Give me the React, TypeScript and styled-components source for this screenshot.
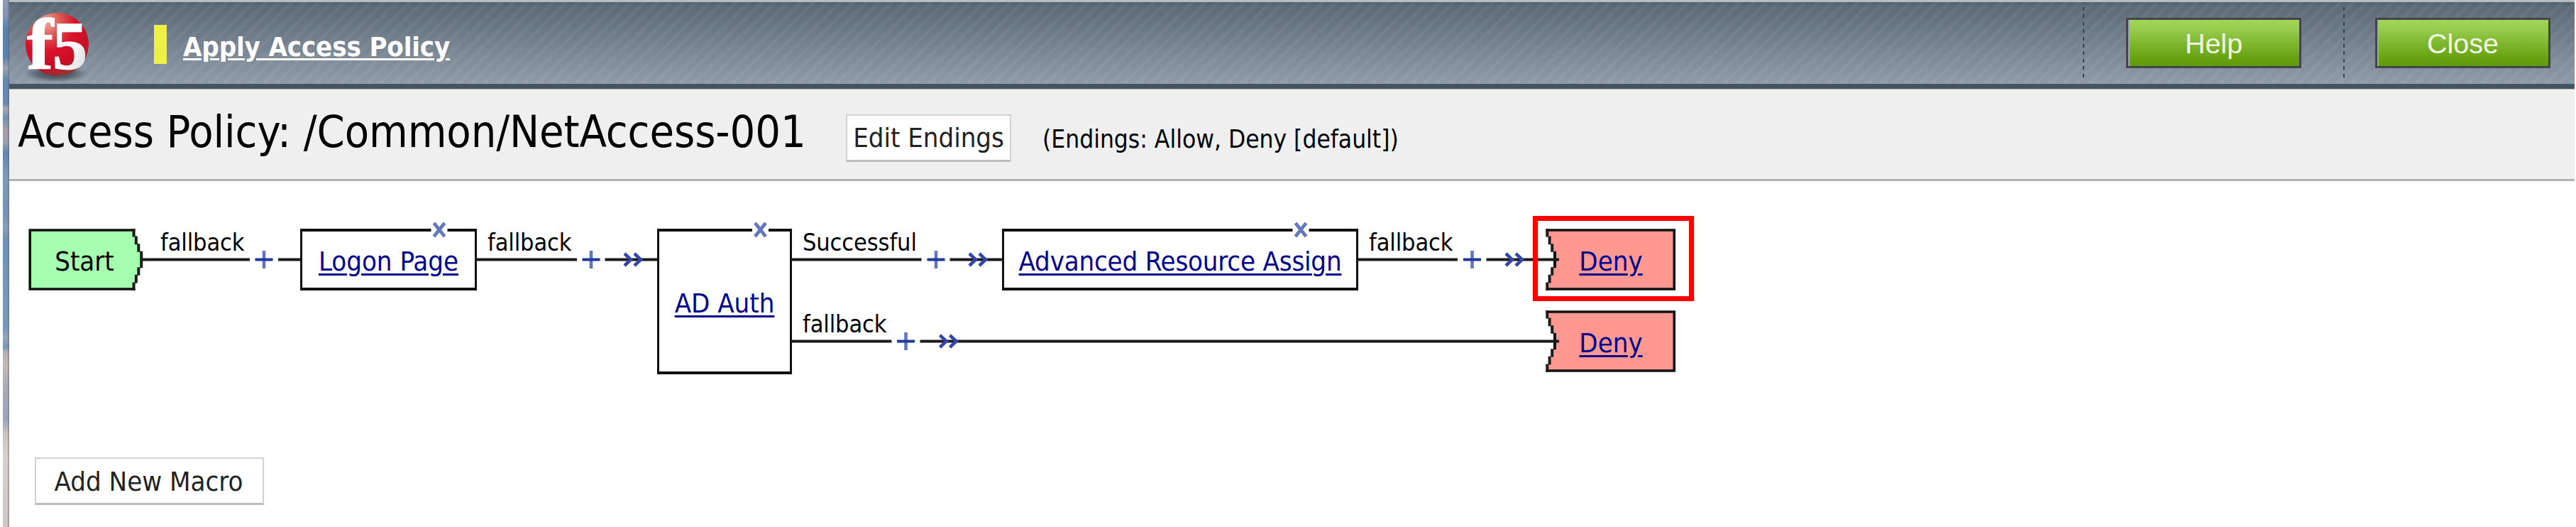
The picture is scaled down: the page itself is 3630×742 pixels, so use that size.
import React from "react";
import styled, { createGlobalStyle } from "styled-components";

const GlobalStyle = createGlobalStyle`
  html, body { margin: 0; background: #fff; }
  * { box-sizing: border-box; }
`;

const tahoma = `"DejaVu Sans Condensed", "DejaVu Sans", sans-serif`;

const Page = styled.div`
  display: flex;
  width: 3630px;
  height: 742px;
  padding: 0 2px 0 4px;
  overflow: hidden;
  background: #fff;
  font-family: ${tahoma};
  font-stretch: condensed;
  white-space: nowrap;
  color: #000;
`;

const DesktopEdge = styled.div`
  flex: none;
  width: 9px;
  border-right: 2px solid rgba(80, 85, 100, 0.35);
  background: linear-gradient(
    #8e9cb5 0, #8495b3 22px, #5b80ad 40px, #5a82b0 80px, #a09fae 96px, #6788ad 112px,
    #6a8bae 146px, #aaa5b0 153px, #7390b0 165px, #a89fa8 184px, #9a9fae 200px,
    #6487ad 215px, #7f9bb8 250px, #7792b5 300px, #8b9db4 318px, #6f92b4 340px,
    #7a9ab8 440px, #7896b6 462px, #98a5b5 475px, #7895b5 489px, #b5aeb2 495px,
    #c4bab8 515px, #a8abb8 545px, #9ba6ba 590px, #c8c2c0 610px, #d8d2cd 640px, #cdc6c1 742px
  );
`;

const Window = styled.div`
  flex: 1;
  display: flex;
  flex-direction: column;
`;

const Banner = styled.header`
  display: flex;
  align-items: center;
  height: 125px;
  padding-left: 17px;
  border-top: 3px solid #b9bcc0;
  border-bottom: 7px solid #465563;
  background:
    repeating-linear-gradient(135deg, rgba(255, 255, 255, 0) 0 5px, rgba(255, 255, 255, 0.05) 8px 10px, rgba(255, 255, 255, 0) 13px),
    linear-gradient(#50606e 0, #5b6875 4%, #8f9ba8 100%);
`;

const Logo = styled.svg`
  flex: none;
  width: 100px;
  height: 115px;
`;

const Flag = styled.span`
  width: 18px;
  height: 55px;
  margin: 3px 23px 0 87px;
  background: #eff045;
`;

const ApplyLink = styled.a`
  padding-top: 11px;
  color: #fff;
  font-size: 38px;
  line-height: 46px;
  font-weight: bold;
  letter-spacing: -0.13px;
  text-decoration: underline;
  text-decoration-thickness: 3px;
  text-underline-offset: 3px;
`;

const Actions = styled.div`
  display: flex;
  align-items: center;
  margin-left: auto;
  padding-right: 34px;
`;

const Divider = styled.span<{ $after: number }>`
  width: 2px;
  height: 101px;
  margin: 0 ${(p) => p.$after}px 0 59px;
  background: repeating-linear-gradient(#35424f 0 5px, transparent 5px 10.4px);
`;

const GreenButton = styled.button`
  width: 247px;
  height: 71px;
  padding: 1px 0 0;
  border: 3px solid #444549;
  border-radius: 0;
  background: linear-gradient(#a3d659 0, #97cc4c 20%, #7db72f 52%, #68a313 82%, #5f9a0c 100%);
  box-shadow: inset 2px 0 0 #9fa9a5;
  color: #f0f8e4;
  font: 39.5px/58px "Liberation Sans", sans-serif;
`;

const TitleBar = styled.div`
  display: flex;
  align-items: center;
  height: 130px;
  padding-left: 12px;
  border-top: 1px solid #b2b2b2;
  border-bottom: 3px solid #b3b3b3;
  background: #efefef;
`;

const Title = styled.h1`
  margin: 0;
  width: 1167px;
  padding-bottom: 7px;
  font-size: 62.5px;
  font-weight: normal;
  line-height: 76px;
  letter-spacing: -0.09px;
`;

const WhiteButton = styled.button<{ $width: number }>`
  width: ${(p) => p.$width}px;
  height: 67px;
  padding: 1px 0 0;
  border: 2px solid #d2d2d2;
  border-bottom: 3px solid #bdbdbd;
  border-radius: 0;
  background: #fff;
  color: #222;
  font: 38px/60px ${tahoma};
  font-stretch: condensed;
`;

const TitleButton = styled(WhiteButton)`
  margin-top: 10px;
`;

const Endings = styled.span`
  margin-left: 44px;
  padding-top: 13px;
  font-size: 35px;
  letter-spacing: 0;
`;

const Canvas = styled.main`
  position: relative;
  flex: 1;
`;

const Wires = styled.svg`
  position: absolute;
  left: -13px;
  top: -255px;
  width: 3628px;
  height: 742px;
  pointer-events: none;
`;

/* Node positions are page coordinates; the canvas starts at (13, 255). */
const Node = styled.div<{ $x: number; $y: number; $w: number; $h?: number; $boxed?: boolean }>`
  position: absolute;
  left: ${(p) => p.$x - 13}px;
  top: ${(p) => p.$y - 255}px;
  width: ${(p) => p.$w}px;
  height: ${(p) => p.$h ?? 87}px;
  display: flex;
  align-items: center;
  justify-content: center;
  padding-top: 4px;
  font-size: 38px;
  line-height: 46px;
  border: ${(p) => (p.$boxed ? "solid #111" : "0 none")};
  border-width: ${(p) => (p.$boxed ? "4px 3px" : "0")};
`;

const NodeLink = styled.a<{ $track?: number }>`
  color: #00008f;
  letter-spacing: ${(p) => p.$track ?? 0}px;
  text-decoration: underline;
  text-decoration-thickness: 3px;
  text-underline-offset: 4px;
`;

const BranchLabel = styled.span<{ $x: number; $y: number }>`
  position: absolute;
  left: ${(p) => p.$x - 13}px;
  top: ${(p) => p.$y - 255}px;
  font-size: 34px;
  line-height: 40px;
  letter-spacing: -0.1px;
`;

const Highlight = styled.div`
  position: absolute;
  left: 2147px;
  top: 49px;
  width: 227px;
  height: 120px;
  border: 7px solid #f00;
`;

const MacroButton = styled(WhiteButton)`
  position: absolute;
  left: 36px;
  top: 389px;
  padding-right: 2px;
`;

const Line = ({ x1, x2, y }: { x1: number; x2: number; y: number }) => (
  <rect x={x1} y={y - 2} width={x2 - x1} height={4} fill="#1a1a1a" />
);

const Plus = ({ x, y }: { x: number; y: number }) => (
  <g>
    <rect x={x - 2.3} y={y - 12.5} width={4.6} height={25} fill="#6477bd" />
    <rect x={x - 12.5} y={y - 2} width={25} height={4} fill="#1f3899" />
  </g>
);

const Chevrons = ({ x, y }: { x: number; y: number }) => (
  <g fill="none" stroke="#3346a8" strokeWidth={4.5}>
    <path d={`M${x + 1.5} ${y - 8.5}l9 8.5l-9 8.5`} />
    <path d={`M${x + 15.5} ${y - 8.5}l9 8.5l-9 8.5`} />
  </g>
);

const Delete = ({ x }: { x: number }) => (
  <g>
    <rect x={x - 11.5} y={312} width={23} height={23} fill="#fff" />
    <path d={`M${x - 7.5} 314l15 19M${x + 7.5} 314l-15 19`} stroke="#6577bb" strokeWidth={4.8} />
  </g>
);

/* Stepped slanted side: four bars going down and the same four mirrored. */
const Steps = ({ xs }: { xs: number[] }) => (
  <path
    d={xs
      .map((x, i) => `M${x} ${i * 10.6}v11.6M${x} ${87 - i * 10.6}v-11.6`)
      .join("")}
    stroke="#1c1c1c"
    strokeWidth={4}
  />
);

const StartShape = () => (
  <g transform="translate(0 322)">
    <path d="M41 1H188.500L200 37V50L188.500 86H41Z" fill="#a5ffb0" />
    <path d="M190.500 2H42.200V85H190.500" fill="none" stroke="#111" strokeWidth={3.6} />
    <Steps xs={[188.5, 191.8, 195.3, 199.2]} />
  </g>
);

const DenyShape = ({ y }: { y: number }) => (
  <g transform={`translate(2178 ${y})`}>
    <path d="M2 1H182V86H2L13 50V37Z" fill="#ff9890" />
    <path d="M0.500 2H181.300V85H0.500" fill="none" stroke="#111" strokeWidth={3.6} />
    <Steps xs={[2.3, 5.6, 9.2, 13]} />
    <path d="M13 32V55" stroke="#111" strokeWidth={3.6} />
  </g>
);

const BallLogo = () => (
  <Logo viewBox="30 3 100 115">
    <defs>
      <radialGradient id="ball" cx="0.33" cy="0.15" r="0.9">
        <stop offset="0" stopColor="#f0a79a" />
        <stop offset="0.25" stopColor="#dc5a55" />
        <stop offset="0.5" stopColor="#d8132c" />
        <stop offset="0.78" stopColor="#c90d24" />
        <stop offset="1" stopColor="#8d3a3c" />
      </radialGradient>
      <radialGradient id="shade">
        <stop offset="0" stopColor="#2d3740" stopOpacity="0.9" />
        <stop offset="0.6" stopColor="#38434d" stopOpacity="0.55" />
        <stop offset="1" stopColor="#55616d" stopOpacity="0" />
      </radialGradient>
      <linearGradient id="ink" x1="0" y1="0" x2="1" y2="1">
        <stop offset="0.5" stopColor="#fff" />
        <stop offset="1" stopColor="#cfcfcf" />
      </linearGradient>
    </defs>
    <ellipse cx="79" cy="104" rx="47" ry="12" fill="url(#shade)" />
    <circle cx="80.500" cy="62.500" r="44.500" fill="url(#ball)" />
    <g fontFamily="Liberation Serif, serif" fontWeight="bold">
      <text x="38" y="97" fontSize="101" fill="#fff" stroke="#fff" strokeWidth="1.5" textLength="37" lengthAdjust="spacingAndGlyphs">f</text>
      <text x="74" y="97" fontSize="96" fill="url(#ink)" stroke="url(#ink)" strokeWidth="1.5" textLength="49" lengthAdjust="spacingAndGlyphs">5</text>
    </g>
  </Logo>
);

export default function App() {
  return (
    <Page>
      <GlobalStyle />
      <DesktopEdge />
      <Window>
        <Banner>
          <BallLogo />
          <Flag />
          <ApplyLink>Apply Access Policy</ApplyLink>
          <Actions>
            <Divider $after={59} />
            <GreenButton>Help</GreenButton>
            <Divider $after={43} />
            <GreenButton>Close</GreenButton>
          </Actions>
        </Banner>
        <TitleBar>
          <Title>Access Policy: /Common/NetAccess-001</Title>
          <TitleButton $width={233}>Edit Endings</TitleButton>
          <Endings>(Endings: Allow, Deny [default])</Endings>
        </TitleBar>
        <Canvas>
          <Node $x={423} $y={322} $w={249} $boxed><NodeLink>Logon Page</NodeLink></Node>
          <Node $x={926} $y={322} $w={190} $h={205} $boxed><NodeLink>AD Auth</NodeLink></Node>
          <Node $x={1412} $y={322} $w={502} $boxed><NodeLink $track={-0.17}>Advanced Resource Assign</NodeLink></Node>
          <Wires viewBox="0 0 3628 742">
            <StartShape />
            <DenyShape y={322} />
            <DenyShape y={437} />
            <Line x1={200} x2={352} y={365.5} />
            <Plus x={372} y={365.5} />
            <Line x1={392} x2={424} y={365.5} />
            <Line x1={671} x2={813} y={365.5} />
            <Plus x={833} y={365.5} />
            <Line x1={852.5} x2={927} y={365.5} />
            <Chevrons x={878.5} y={365.5} />
            <Line x1={1115} x2={1298.5} y={365.5} />
            <Plus x={1319} y={365.5} />
            <Line x1={1338.5} x2={1413} y={365.5} />
            <Chevrons x={1364.5} y={365.5} />
            <Line x1={1913} x2={2054} y={365.5} />
            <Plus x={2074.5} y={365.5} />
            <Line x1={2094.5} x2={2197} y={365.5} />
            <Chevrons x={2120.5} y={365.5} />
            <Line x1={1115} x2={1256.5} y={480.5} />
            <Plus x={1276.5} y={480.5} />
            <Line x1={1296.5} x2={2197} y={480.5} />
            <Chevrons x={1323} y={480.5} />
            <Delete x={619} />
            <Delete x={1071.5} />
            <Delete x={1833} />
          </Wires>
          <Node $x={40} $y={322} $w={158}>Start</Node>
          <Node $x={2178} $y={322} $w={184}><NodeLink>Deny</NodeLink></Node>
          <Node $x={2178} $y={437} $w={184}><NodeLink>Deny</NodeLink></Node>
          <BranchLabel $x={226} $y={321}>fallback</BranchLabel>
          <BranchLabel $x={687} $y={321}>fallback</BranchLabel>
          <BranchLabel $x={1131} $y={321}>Successful</BranchLabel>
          <BranchLabel $x={1929} $y={321}>fallback</BranchLabel>
          <BranchLabel $x={1131} $y={436}>fallback</BranchLabel>
          <Highlight />
          <MacroButton $width={323}>Add New Macro</MacroButton>
        </Canvas>
      </Window>
    </Page>
  );
}
